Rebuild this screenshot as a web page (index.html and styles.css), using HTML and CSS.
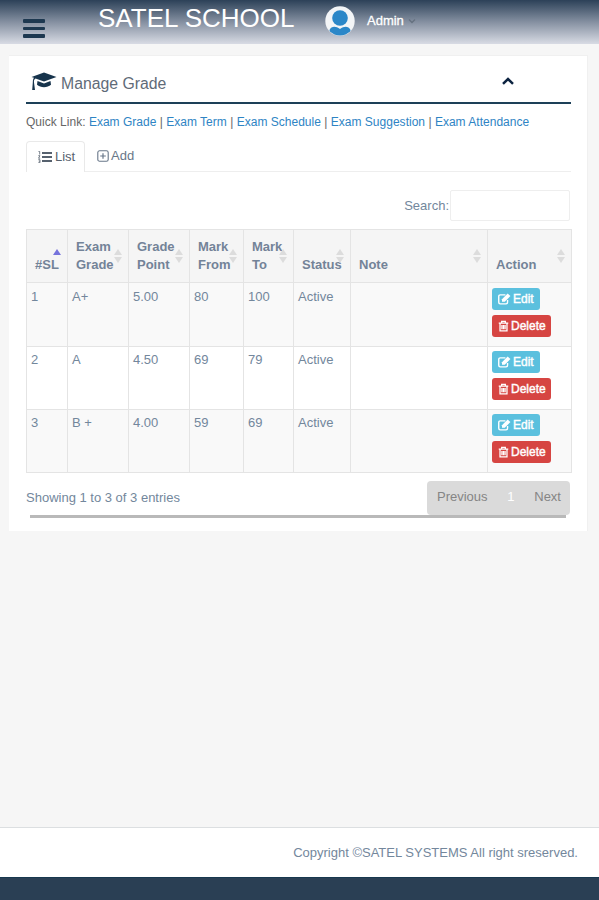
FILE: index.html
```
<!DOCTYPE html>
<html lang="en">
<head>
  <meta charset="UTF-8">
  <meta name="viewport" content="width=device-width, initial-scale=1">
  <title>Manage Grade | SATEL SCHOOL</title>
  <link rel="stylesheet" href="styles.css">
</head>
<body>
  <svg class="sprite" width="0" height="0">
    <symbol id="edit" viewBox="0 0 14 12">
      <path d="M10.300 7v2.600a1.600 1.600 0 0 1-1.600 1.600H2.400A1.600 1.600 0 0 1 .8 9.600V3.200a1.600 1.600 0 0 1 1.600-1.600H8" fill="none" stroke="currentColor" stroke-width="1.500"/>
      <path d="M4.300 6.200 10.400.2l3 2.600L7.300 8.900h-3z" fill="currentColor"/>
    </symbol>
    <symbol id="trash" viewBox="0 0 12 12">
      <path d="M.8 2.800h10.400M4 2.500V.9h4v1.600M2.200 3v8.200h7.600V3M4.300 4.800v4.700M6 4.800v4.700M7.700 4.800v4.700" fill="none" stroke="currentColor" stroke-width="1.400"/>
    </symbol>
  </svg>

  <!-- Top bar -->
  <header class="topbar">
    <button class="menu-toggle"><span></span><span></span><span></span></button>
    <h1>SATEL SCHOOL</h1>
    <svg class="avatar" viewBox="0 0 30 30">
      <clipPath id="face"><circle cx="15" cy="15" r="14.500"/></clipPath>
      <circle cx="15" cy="15" r="14.700" fill="#f3f5f7"/>
      <g clip-path="url(#face)" fill="#2b87c8">
        <path d="M4.500 24c2-4 6-4.300 10.500-1 4.500-3.300 8.500-3 10.500 1v6h-21z"/>
        <circle cx="15" cy="12.200" r="9" fill="#f3f5f7"/>
        <circle cx="15" cy="12" r="7.800"/>
      </g>
    </svg>
    <span class="user">Admin</span>
    <svg class="caret" viewBox="0 0 8 6"><path d="M1 1.500 4 4.500l3-3" fill="none" stroke="#65717f" stroke-width="1.300"/></svg>
  </header>

  <main class="content">
    <section class="panel">
      <div class="panel-title">
        <svg class="cap" viewBox="0 0 26 19">
          <path d="M13 .5 25.500 5 13 9.500 4.500 6.500c-1.300.8-1.700 2.200-1.500 4L4 18H1.200l.6-7.500c0-2 .3-3.500 1.200-4.700L.5 5z"/>
          <path d="M6.500 9 13 11.400 19.500 9l.5 3.800c-3.500 3.200-10.500 3.200-14 0z"/>
        </svg>
        <h3>Manage Grade</h3>
        <svg class="collapse" viewBox="0 0 14 10"><path d="M2 7.800 7 3l5 4.800" fill="none" stroke="#0c2340" stroke-width="2.500"/></svg>
      </div>

      <div class="quick-link">Quick Link: <a>Exam Grade</a> | <a>Exam Term</a> | <a>Exam Schedule</a> | <a>Exam Suggestion</a> | <a>Exam Attendance</a></div>

      <div class="tabs">
        <div class="tab active">
          <svg class="list-icon" viewBox="0 0 14 12"><path d="M4 2h10M4 6h10M4 10h10" stroke="currentColor" stroke-width="2"/><path d="M.5.500h1.200v3M.3 4.700h1.700L.5 7.200h1.700M.3 8.700h1.700v3H.3M.8 10.200H2" fill="none" stroke="currentColor" stroke-width=".8"/></svg>
          List
        </div>
        <div class="tab">
          <svg class="plus-icon" viewBox="0 0 12 12"><rect x=".8" y=".8" width="10.400" height="10.400" rx="1.800" fill="none" stroke="currentColor" stroke-width="1.100"/><path d="M6 3.200v5.600M3.200 6h5.600" stroke="currentColor" stroke-width="1.200"/></svg>
          Add
        </div>
      </div>

      <div class="search">
        <label for="search">Search:</label>
        <input type="text" id="search">
      </div>

      <table class="grades">
        <colgroup>
          <col class="c-sl"><col class="c-grade"><col class="c-point"><col class="c-from"><col class="c-to"><col class="c-status"><col class="c-note"><col class="c-action">
        </colgroup>
        <thead>
          <tr>
            <th class="sorted">#SL</th>
            <th>Exam<br>Grade</th>
            <th>Grade<br>Point</th>
            <th>Mark<br>From</th>
            <th>Mark<br>To</th>
            <th>Status</th>
            <th>Note</th>
            <th>Action</th>
          </tr>
        </thead>
        <tbody>
          <tr>
            <td>1</td><td>A+</td><td>5.00</td><td>80</td><td>100</td><td>Active</td><td></td>
            <td>
              <a class="btn btn-info"><svg><use href="#edit"/></svg>Edit</a>
              <a class="btn btn-danger"><svg><use href="#trash"/></svg>Delete</a>
            </td>
          </tr>
          <tr>
            <td>2</td><td>A</td><td>4.50</td><td>69</td><td>79</td><td>Active</td><td></td>
            <td>
              <a class="btn btn-info"><svg><use href="#edit"/></svg>Edit</a>
              <a class="btn btn-danger"><svg><use href="#trash"/></svg>Delete</a>
            </td>
          </tr>
          <tr>
            <td>3</td><td>B +</td><td>4.00</td><td>59</td><td>69</td><td>Active</td><td></td>
            <td>
              <a class="btn btn-info"><svg><use href="#edit"/></svg>Edit</a>
              <a class="btn btn-danger"><svg><use href="#trash"/></svg>Delete</a>
            </td>
          </tr>
        </tbody>
      </table>

      <div class="table-footer">
        <span>Showing 1 to 3 of 3 entries</span>
        <div class="pagination">
          <a>Previous</a>
          <a class="current">1</a>
          <a>Next</a>
        </div>
      </div>
      <div class="scrollbar"></div>
    </section>
  </main>

  <footer class="footer">Copyright ©SATEL SYSTEMS All right sreserved.</footer>
  <div class="bottom-bar"></div>
</body>
</html>
```
FILE: styles.css
```
* {
  box-sizing: border-box;
}

body {
  margin: 0;
  height: 900px;
  display: flex;
  flex-direction: column;
  overflow: hidden;
  background: #f6f6f6;
  color: #73879c;
  font-family: "Liberation Sans", Arial, sans-serif;
  font-size: 13px;
  line-height: 18px;
}

.sprite {
  display: block;
  flex: none;
}

/* top bar */
.topbar {
  flex: none;
  display: flex;
  align-items: flex-start;
  height: 44px;
  padding-left: 23px;
  background: linear-gradient(#2c4158, #8590a1 50%, #d8dbe4);
}

.menu-toggle {
  display: flex;
  flex-direction: column;
  gap: 4px;
  width: 22px;
  margin-top: 19px;
  padding: 0;
  border: none;
  background: none;
}

.menu-toggle span {
  height: 3.500px;
  border-radius: 1px;
  background: #1d3850;
}

h1 {
  width: 197px;
  margin: 3px 0 0 53px;
  color: #fff;
  font-size: 26px;
  font-weight: normal;
  line-height: 30px;
  white-space: nowrap;
}

.avatar {
  width: 30px;
  height: 30px;
  margin: 6px 0 0 30px;
}

.user {
  width: 38px;
  margin: 12px 0 0 12px;
  color: #fff;
  -webkit-text-stroke: 0.3px #fff;
}

.caret {
  width: 8px;
  height: 6px;
  margin: 18px 0 0 3px;
}

/* panel */
.content {
  flex: 1;
  padding: 11px 11px 0 9px;
}

.panel {
  height: 476px;
  padding: 0 16px 0 17px;
  border: 1px solid #f0f0f0;
  border-width: 1px 1px 0 0;
  background: #fff;
}

.panel-title {
  display: flex;
  align-items: center;
  height: 48px;
  border-bottom: 2px solid #1d4058;
}

.cap {
  width: 26px;
  height: 19px;
  margin: 4px 4px 0 5px;
  fill: #17344c;
}

h3 {
  margin: 9px auto 0 0;
  color: #5f6b78;
  font-size: 15.800px;
  font-weight: normal;
}

.collapse {
  width: 14px;
  height: 10px;
  margin: 4px 56px 0 0;
}

.quick-link {
  margin-top: 9px;
  color: #666;
  font-size: 12px;
  letter-spacing: 0.015px;
  white-space: nowrap;
}

.quick-link a {
  color: #2e84c4;
}

.tabs {
  display: flex;
  height: 31px;
  margin-top: 10px;
  border-bottom: 1px solid #eee;
}

.tab {
  display: flex;
  align-items: center;
  gap: 2px;
  height: 30px;
  padding: 0 12px;
  color: #687789;
}

.tab.active {
  gap: 3px;
  width: 59px;
  height: 31px;
  padding: 0 0 1px 11px;
  border: 1px solid #e9e9e9;
  border-bottom: none;
  border-radius: 4px 4px 0 0;
  background: #fff;
  color: #56616e;
}

.list-icon {
  width: 14px;
  height: 12px;
}

.plus-icon {
  width: 12px;
  height: 12px;
}

.search {
  display: flex;
  justify-content: flex-end;
  align-items: center;
  height: 31px;
  margin: 18px 1px 8px 0;
}

.search input {
  width: 120px;
  height: 31px;
  margin-left: 1px;
  border: 1px solid #eee;
  border-radius: 2px;
}

/* table */
.grades {
  width: 546px;
  table-layout: fixed;
  border-collapse: collapse;
}

.c-sl { width: 41px; }
.c-grade, .c-point { width: 61px; }
.c-from { width: 54px; }
.c-to { width: 50px; }
.c-status { width: 57px; }
.c-note { width: 137px; }

.grades th,
.grades td {
  border: 1px solid #e4e4e4;
  text-align: left;
}

.grades th {
  position: relative;
  height: 53px;
  padding: 0 0 8px 8px;
  background: #f5f5f5;
  color: #738398;
  vertical-align: bottom;
}

.grades th::before,
.grades th::after {
  content: "";
  position: absolute;
  right: 6px;
  border: 4px solid transparent;
}

.grades th::before {
  top: 15px;
  border-bottom: 6px solid #dcdcdc;
}

.grades th::after {
  top: 27px;
  border-top: 6px solid #dcdcdc;
  border-bottom: none;
}

.grades th.sorted::before {
  border-bottom-color: #7673dc;
}

.grades th.sorted::after {
  display: none;
}

.grades td {
  height: 63px;
  padding: 4px 0 0 4px;
  vertical-align: top;
}

.grades tbody tr:first-child td {
  height: 64px;
  padding-top: 5px;
}

.grades tbody tr:nth-child(odd) {
  background: #f9f9f9;
}

.btn {
  display: flex;
  align-items: center;
  gap: 2px;
  height: 22px;
  margin-bottom: 5px;
  padding-left: 6px;
  border-radius: 3px;
  color: #fff;
  font-size: 12px;
  -webkit-text-stroke: 0.4px #fff;
}

.btn svg {
  width: 13px;
  height: 12px;
}

.btn-info {
  width: 48px;
  background: #5bc0de;
}

.btn-danger {
  width: 59px;
  background: #d64542;
}

.btn-danger svg {
  width: 11px;
}

/* below the table */
.table-footer {
  display: flex;
  justify-content: space-between;
  align-items: center;
  height: 34px;
  margin: 8px 1px 0 0;
}

.pagination {
  display: flex;
  justify-content: space-between;
  align-items: center;
  width: 143px;
  height: 34px;
  padding: 0 9px 2px 10px;
  border-radius: 4px;
  background: #dadada;
  color: #858585;
}

.pagination .current {
  color: #fff;
}

.scrollbar {
  height: 3px;
  margin: 0 5px 0 4px;
  background: #b9b9b9;
}

.footer {
  flex: none;
  height: 50px;
  padding: 16px 21px 0 0;
  border-top: 1px solid #dcdfe1;
  background: #fff;
  text-align: right;
}

.bottom-bar {
  flex: none;
  height: 23px;
  border-top: 1px solid #17384f;
  background: #2a3f54;
}
```
